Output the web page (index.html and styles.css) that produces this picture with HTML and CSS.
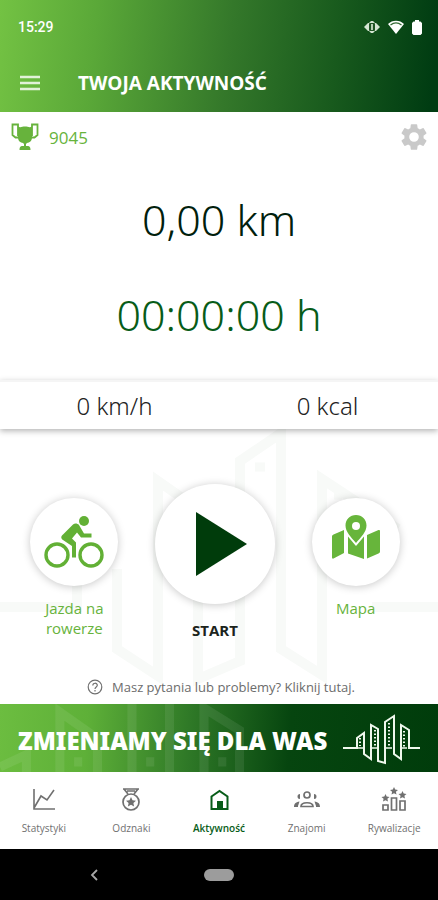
FILE: index.html
```html
<!DOCTYPE html>
<html lang="pl">
<head>
<meta charset="utf-8">
<meta name="viewport" content="width=device-width, initial-scale=1">
<title>Twoja aktywność</title>
<link rel="stylesheet" href="styles.css">
</head>
<body>
<div class="app">
  <header class="top">
    <div class="status">
      <span class="clock">15:29</span>
      <div class="status-icons">
        <svg width="16" height="14" viewBox="0 0 16 14"><path d="M0 7l4-4h1l2-2h2l2 2h1l4 4-4 4h-1l-2 2H7l-2-2H4z" fill="#d5e6d3"/><rect x="5" y="3" width="6" height="8" rx="1" fill="#1f5423"/><rect x="7" y="4" width="2" height="6" fill="#b7d0b5"/></svg>
        <svg width="16" height="14" viewBox="0 0 16 14"><path d="M0 4C4-.5 12-.5 16 4L8 14z" fill="#fff"/><path d="M2.500 5C6 2.200 10 2.200 13.500 5" fill="none" stroke="#356b35" stroke-width="1.300"/></svg>
        <svg width="10" height="15" viewBox="0 0 10 15"><path d="M3 0h4v1.500h1.500L10 3v10.500L8.500 15h-7L0 13.500V3l1.500-1.500H3z" fill="#fff"/></svg>
      </div>
    </div>
    <div class="titlebar">
      <button class="icon-btn" type="button" aria-label="Menu">
        <svg width="20" height="16" viewBox="0 0 20 16"><path d="M0 2h20M0 8h20M0 14h20" stroke="#e2f2d9" stroke-width="2.400"/></svg>
      </button>
      <h1>TWOJA AKTYWNOŚĆ</h1>
    </div>
  </header>

  <main>
    <section class="summary">
      <div class="score-row">
        <div class="score">
          <svg width="28" height="28" viewBox="0 0 28 28" fill="#67b33c"><path d="M7 3.500c2.500 1.500 4 0 7 0s4.500 1.500 7 0v11c0 3.500-2.500 5-5 5.500l-1 1v2h2c1.500 0 2.500 1 2.500 4H8.500c0-3 1-4 2.500-4h2v-2l-1-1c-2.500-.5-5-2-5-5.500z"/><path d="M7.500 14.500h-3L1.500 12V1.500H7V13M20.500 14.500h3l3-2.500V1.500H21V13" fill="none" stroke="#67b33c" stroke-width="1.800"/></svg>
          <span>9045</span>
        </div>
        <button class="icon-btn" type="button" aria-label="Ustawienia">
          <svg width="32" height="32" viewBox="0 0 24 24" fill="#c9c9c9"><path d="M19.140 12.940c.04-.3.060-.61.060-.94s-.02-.64-.07-.94l2.030-1.580a.49.490 0 0 0 .12-.61l-1.920-3.320a.49.490 0 0 0-.59-.22l-2.390.96c-.5-.38-1.030-.7-1.620-.94L14.400 2.810a.48.480 0 0 0-.48-.41h-3.840a.48.480 0 0 0-.47.410L9.250 5.350c-.59.240-1.130.57-1.620.94l-2.390-.96a.49.490 0 0 0-.59.220L2.740 8.870a.48.480 0 0 0 .12.610l2.030 1.580c-.05.3-.09.630-.09.940s.02.640.070.940l-2.030 1.580a.49.490 0 0 0-.12.610l1.920 3.320c.12.220.37.290.59.220l2.390-.96c.5.380 1.030.7 1.620.940l.36 2.540c.05.240.24.410.48.410h3.840c.24 0 .44-.17.470-.41l.36-2.540c.59-.24 1.130-.56 1.620-.94l2.390.96c.22.080.47 0 .59-.22l1.920-3.320a.48.480 0 0 0-.12-.61zM12 15.600a3.600 3.600 0 1 1 0-7.200 3.600 3.600 0 0 1 0 7.200z"/></svg>
        </button>
      </div>
      <p class="big distance">0,00 km</p>
      <p class="big time">00:00:00 h</p>
    </section>

    <section class="stats">
      <span>0 km/h</span>
      <span>0 kcal</span>
    </section>

    <section class="controls">
      <svg class="watermark" viewBox="0 0 438 276" preserveAspectRatio="xMidYMin slice" fill="none" stroke="#f8faf8" stroke-width="10" aria-hidden="true">
        <path d="M0 178h77v-60M117 140v80l41 27V52l40 28M198 170v80l42-18V32l41-28v216l41 26V50l76 50M372 178h66"/>
        <path d="M255 38h10M334 66h8" stroke-width="9"/>
      </svg>
      <div class="actions">
        <div class="action">
          <button class="round" type="button" id="bike" aria-labelledby="bike-label">
            <svg width="60" height="54" viewBox="0 0 60 54"><g fill="none" stroke="#62b035" stroke-width="3.400"><circle cx="13" cy="40" r="11"/><circle cx="47" cy="40" r="11"/></g><circle cx="40" cy="6" r="5" fill="#62b035"/><path d="M29 9.500c2-1.500 4.500-1 6 .5l5 8.500h7.500v4H37l-4-5-5 6 4 4v15h-4V31l-9-6c-2-1.500-2.500-3.500 0-5.500z" fill="#62b035"/></svg>
          </button>
          <span class="label" id="bike-label">Jazda na<br>rowerze</span>
        </div>
        <div class="action">
          <button class="round start" type="button" aria-labelledby="start-label">
            <svg width="52" height="64" viewBox="0 0 52 64"><path d="M1 0l51 32L1 64z" fill="#003c0b"/></svg>
          </button>
          <span class="label start-label" id="start-label">START</span>
        </div>
        <div class="action">
          <button class="round" type="button" aria-labelledby="map-label">
            <svg width="50" height="54" viewBox="0 0 50 54" fill="#67b53b"><path d="M1 21.500q0-1.500 1.500-2L13 15v23L2.500 43.500Q1 44 1 42.500zM17 20l8 9 8-9v24l-16-5.500zM36 20l11.500-5q1.500-.5 1.500 1v20.500q0 1.500-1.500 2L36 43.500z"/><path d="M25 0c6 0 10.500 4.500 10.500 10.500C35.500 17 30 22 25 28c-5-6-10.500-11-10.500-17.500C14.500 4.500 19 0 25 0z" stroke="#fff" stroke-width="4" paint-order="stroke"/><circle cx="25" cy="11" r="4" fill="#fff"/></svg>
          </button>
          <span class="label" id="map-label">Mapa</span>
        </div>
      </div>
      <a class="help" href="#pomoc">
        <svg width="16" height="16" viewBox="0 0 16 16" fill="none" stroke="#707070" stroke-width="1.200"><circle cx="8" cy="8" r="6.800"/><path d="M5.800 6.500c0-3 4.500-3 4.500-.2 0 1.600-2.300 1.700-2.300 3.600M8 11v1.500"/></svg>
        <span>Masz pytania lub problemy? Kliknij tutaj.</span>
      </a>
    </section>

    <a class="banner" href="#zmiany">
      <svg class="banner-art" viewBox="0 0 438 67" preserveAspectRatio="xMinYMid slice" fill="none" stroke="#fff" stroke-opacity=".08" stroke-width="9" aria-hidden="true"><path d="M0 62l26-12v17M59 67V8l37 26v33M73 57h8M130 67V0M167 67V0M144 57h8M201 67V4l35 22v41M215 57h8"/></svg>
      <span>ZMIENIAMY SIĘ DLA WAS</span>
      <svg class="city" width="78" height="52" viewBox="0 0 78 52" fill="none" stroke="#eff8ed" stroke-width="2"><path d="M1 34h14V24l7-5v21l7 5V11l7 4v32l7 2V8l9-6v38l7 5V11l8 5v18h12"/><path d="M15 34h6M29 34h6M44 34h6M59 34h6" stroke-width="1.500"/><path d="M18 24v8M33 16v17M47 9v23M62 17v16" stroke-width="2" stroke-dasharray="1.500 2"/></svg>
    </a>
  </main>

  <nav class="tabs">
    <a href="#statystyki">
      <svg width="24" height="26" viewBox="0 0 24 26" fill="none" stroke="#707070" stroke-width="1.600"><path d="M2 3v20h21M2 22l7-12 6 4 7-10"/></svg>
      <span>Statystyki</span>
    </a>
    <a href="#odznaki">
      <svg width="24" height="26" viewBox="0 0 24 26" fill="none" stroke="#707070" stroke-width="1.700"><path d="M4 3h16M5 3l4 5M19 3l-4 5M8 5h8"/><circle cx="12" cy="16" r="8"/><path d="M12 11l1.500 3.300 3.500.4-2.600 2.400.7 3.500-3.100-1.800-3.100 1.800.7-3.500L7 14.700l3.500-.4z" fill="#707070" stroke="none"/></svg>
      <span>Odznaki</span>
    </a>
    <a class="active" href="#aktywnosc" aria-current="page">
      <svg width="24" height="26" viewBox="0 0 24 26" fill="none" stroke="#075c18" stroke-width="2"><path d="M4.500 10.500L12.500 5l8 5.500V23h-16z"/><path d="M11 22v-6h4v6z" fill="#075c18"/></svg>
      <span>Aktywność</span>
    </a>
    <a href="#znajomi">
      <svg width="26" height="26" viewBox="0 0 26 26" fill="none" stroke="#707070" stroke-width="1.700"><circle cx="13" cy="9" r="3"/><path d="M7 20.500c0-5 12-5 12 0z"/><g fill="#707070" stroke="none"><path d="M6 8v5a2.500 2.500 0 1 1 0-5M20 8v5a2.500 2.500 0 1 0 0-5M0 21c0-3 1.500-5 5.500-5.500L4 20v1zM26 21c0-3-1.500-5-5.500-5.500L22 20v1z"/></g></svg>
      <span>Znajomi</span>
    </a>
    <a href="#rywalizacje">
      <svg width="26" height="26" viewBox="0 0 26 26" fill="none" stroke="#707070" stroke-width="1.700"><path d="M2 19h5v5H2zM10.500 12h5v12h-5zM19 15h5v9h-5z"/><g fill="#707070" stroke="none"><path id="star" d="M13 1l1.200 2.600 2.800.3-2.100 1.900.6 2.800-2.500-1.400-2.500 1.400.6-2.800L9 3.900l2.800-.3z"/><use href="#star" x="-8.500" y="7"/><use href="#star" x="8.500" y="4"/></g></svg>
      <span>Rywalizacje</span>
    </a>
  </nav>

  <footer class="system">
    <button class="icon-btn" type="button" aria-label="Wstecz"><svg width="8" height="12" viewBox="0 0 8 12"><path d="M7 1L2 6l5 5" fill="none" stroke="#a8a8a8" stroke-width="1.800"/></svg></button>
    <button class="pill" type="button" aria-label="Ekran główny"></button>
  </footer>
</div>
</body>
</html>
```
FILE: styles.css
```css
* {
  box-sizing: border-box;
}

body {
  margin: 0;
  background: #fff;
  color: #222;
  font-family: "Open Sans", "Noto Sans", sans-serif;
}

h1,
p {
  margin: 0;
}

a {
  color: inherit;
  text-decoration: none;
}

svg {
  display: block;
  flex: none;
}

button {
  border: 0;
  padding: 0;
  background: none;
  font: inherit;
  cursor: pointer;
}

.app {
  display: flex;
  flex-direction: column;
  min-height: 100vh;
}

main {
  display: flex;
  flex-direction: column;
  flex: 1;
}

.top {
  background: linear-gradient(96deg, #73c243 0%, #5aa838 22%, #34782a 52%, #185a1d 76%, #003c12 98%);
  color: #fff;
}

.status {
  display: flex;
  justify-content: space-between;
  align-items: center;
  height: 54px;
  padding: 0 16px 0 18px;
}

.clock {
  font-family: Roboto, sans-serif;
  font-size: 14px;
  font-weight: 500;
}

.status-icons {
  display: flex;
  align-items: center;
  gap: 8px;
}

.titlebar {
  display: flex;
  align-items: center;
  gap: 38px;
  height: 58px;
  padding: 0 20px;
}

h1 {
  font-size: 19px;
  line-height: 28px;
  font-weight: 700;
}

.icon-btn {
  display: flex;
  align-items: center;
  justify-content: center;
}

.score-row {
  display: flex;
  justify-content: space-between;
  align-items: center;
  height: 50px;
  padding: 0 8px 0 11px;
}

.score {
  display: flex;
  align-items: center;
  gap: 10px;
  color: #67b33c;
  font-size: 17px;
}

.summary {
  padding-bottom: 37px;
}

.big {
  font-family: "Noto Sans", "Open Sans", sans-serif;
  font-size: 43px;
  line-height: 56px;
  font-weight: 300;
  text-align: center;
}

.distance {
  margin-top: 30px;
  color: #00200c;
}

.time {
  margin-top: 39px;
  color: #075c18;
}

.stats {
  position: relative;
  z-index: 1;
  display: grid;
  grid-template-columns: 1fr 1fr;
  align-items: center;
  height: 49px;
  padding: 0 4px 0 8px;
  background: #fff;
  border-top: 2px solid #f5f5f5;
  box-shadow: 0 2px 6px rgba(0, 0, 0, 0.3);
  font-family: "Noto Sans", "Open Sans", sans-serif;
  font-size: 24px;
  line-height: 32px;
  font-weight: 300;
  text-align: center;
}

.controls {
  position: relative;
  display: flex;
  flex-direction: column;
  flex: 1;
  justify-content: space-between;
  padding: 55px 0 7px;
}

.watermark {
  position: absolute;
  inset: 0;
  width: 100%;
  height: 100%;
}

.actions {
  position: relative;
  display: grid;
  grid-template-columns: repeat(3, 1fr);
  align-items: start;
  padding: 0 12px 0 4px;
}

.action {
  display: flex;
  flex-direction: column;
  align-items: center;
  gap: 12px;
  padding-top: 14px;
}

.action:has(.start) {
  gap: 16px;
  padding-top: 0;
}

.round {
  display: flex;
  align-items: center;
  justify-content: center;
  width: 88px;
  height: 88px;
  border-radius: 50%;
  background: #fff;
  box-shadow: 0 1px 8px rgba(0, 0, 0, 0.22);
}

.start {
  width: 120px;
  height: 120px;
  padding-left: 12px;
}

.label {
  color: #67b33c;
  font-size: 15px;
  line-height: 20px;
  text-align: center;
}

.start-label {
  color: #1c241c;
  font-weight: 700;
}

.help {
  position: relative;
  display: flex;
  align-items: center;
  justify-content: center;
  gap: 9px;
  padding-left: 4px;
  color: #6c6c6c;
  font-size: 13px;
  line-height: 20px;
}

.banner {
  position: relative;
  display: flex;
  align-items: center;
  justify-content: space-between;
  height: 68px;
  padding: 4px 18px 0;
  background: linear-gradient(94deg, #6cbd40 0%, #5eb038 20%, #2f7927 43%, #06450f 66%, #003c0b 100%);
  color: #fff;
  font-family: "Noto Sans", "Open Sans", sans-serif;
  font-size: 24px;
  font-weight: 900;
  white-space: nowrap;
}

.banner span,
.city {
  position: relative;
}

.banner-art {
  position: absolute;
  inset: 0;
  width: 100%;
  height: 100%;
}

.tabs {
  display: grid;
  grid-template-columns: repeat(5, 1fr);
  height: 77px;
  padding-top: 14px;
  background: #fff;
}

.tabs a {
  display: flex;
  flex-direction: column;
  align-items: center;
  gap: 8px;
  color: #707070;
  font-size: 10px;
  line-height: 16px;
}

.tabs .active {
  color: #075c18;
  font-weight: 600;
}

.system {
  display: grid;
  grid-template-columns: 1fr 60px 1fr;
  align-items: center;
  justify-items: center;
  height: 51px;
  background: #000;
}

.system .icon-btn {
  margin-right: 1px;
}

.pill {
  width: 30px;
  height: 12px;
  border-radius: 6px;
  background: #9c9c9c;
}
```
